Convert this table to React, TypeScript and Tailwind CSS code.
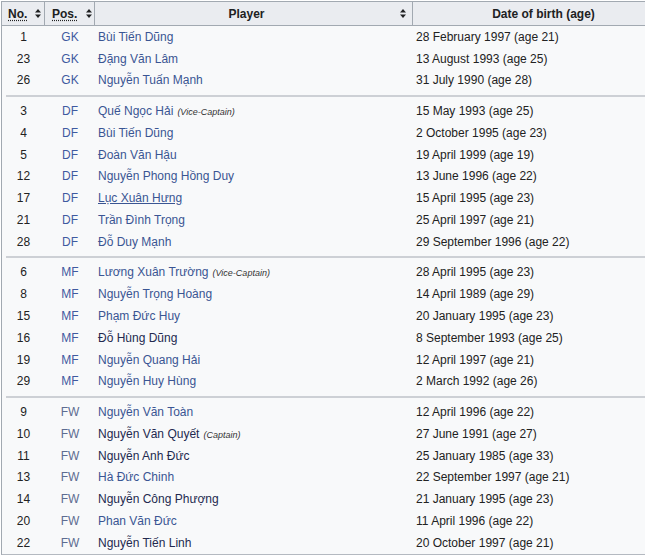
import React from "react";

type Player = {
  no: number;
  pos: string;
  name: string;
  note?: string;
  dob: string;
  visited?: boolean;
  hover?: boolean;
};

// squad grouped by position
const groups: Player[][] = [
  [
    { no: 1, pos: "GK", name: "Bùi Tiến Dũng", dob: "28 February 1997 (age 21)" },
    { no: 23, pos: "GK", name: "Đặng Văn Lâm", dob: "13 August 1993 (age 25)" },
    { no: 26, pos: "GK", name: "Nguyễn Tuấn Mạnh", dob: "31 July 1990 (age 28)" },
  ],
  [
    { no: 3, pos: "DF", name: "Quế Ngọc Hải", note: "(Vice-Captain)", dob: "15 May 1993 (age 25)" },
    { no: 4, pos: "DF", name: "Bùi Tiến Dũng", dob: "2 October 1995 (age 23)" },
    { no: 5, pos: "DF", name: "Đoàn Văn Hậu", dob: "19 April 1999 (age 19)" },
    { no: 12, pos: "DF", name: "Nguyễn Phong Hồng Duy", dob: "13 June 1996 (age 22)" },
    { no: 17, pos: "DF", name: "Lục Xuân Hưng", dob: "15 April 1995 (age 23)", hover: true },
    { no: 21, pos: "DF", name: "Trần Đình Trọng", dob: "25 April 1997 (age 21)" },
    { no: 28, pos: "DF", name: "Đỗ Duy Mạnh", dob: "29 September 1996 (age 22)" },
  ],
  [
    { no: 6, pos: "MF", name: "Lương Xuân Trường", note: "(Vice-Captain)", dob: "28 April 1995 (age 23)" },
    { no: 8, pos: "MF", name: "Nguyễn Trọng Hoàng", dob: "14 April 1989 (age 29)" },
    { no: 15, pos: "MF", name: "Phạm Đức Huy", dob: "20 January 1995 (age 23)" },
    { no: 16, pos: "MF", name: "Đỗ Hùng Dũng", dob: "8 September 1993 (age 25)", visited: true },
    { no: 19, pos: "MF", name: "Nguyễn Quang Hải", dob: "12 April 1997 (age 21)" },
    { no: 29, pos: "MF", name: "Nguyễn Huy Hùng", dob: "2 March 1992 (age 26)" },
  ],
  [
    { no: 9, pos: "FW", name: "Nguyễn Văn Toàn", dob: "12 April 1996 (age 22)" },
    { no: 10, pos: "FW", name: "Nguyễn Văn Quyết", note: "(Captain)", dob: "27 June 1991 (age 27)", visited: true },
    { no: 11, pos: "FW", name: "Nguyễn Anh Đức", dob: "25 January 1985 (age 33)", visited: true },
    { no: 13, pos: "FW", name: "Hà Đức Chinh", dob: "22 September 1997 (age 21)" },
    { no: 14, pos: "FW", name: "Nguyễn Công Phượng", dob: "21 January 1995 (age 23)", visited: true },
    { no: 20, pos: "FW", name: "Phan Văn Đức", dob: "11 April 1996 (age 22)" },
    { no: 22, pos: "FW", name: "Nguyễn Tiến Linh", dob: "20 October 1997 (age 21)", visited: true },
  ],
];

function SortIcon() {
  return (
    <svg width="6" height="9" viewBox="0 0 6 9" className="shrink-0">
      <path d="M3 0L6 3.6H0Z" fill="#202122" />
      <path d="M3 9L0 5.4H6Z" fill="#202122" />
    </svg>
  );
}

function Row({ p }: { p: Player }) {
  return (
    <div className="grid grid-cols-[43px_50px_318px_1fr] h-[21.8px] items-center whitespace-nowrap">
      <div className="text-center text-[#222]">{p.no}</div>
      <div className={"text-center " + (p.pos === "FW" ? "text-[#5d6c91]" : "text-[#3f5aa0]")}>{p.pos}</div>
      <div className="pl-[3px]">
        <span className={(p.visited ? "text-[#23294f]" : "text-[#3a5593]") + (p.hover ? " underline" : "")}>
          {p.name}
        </span>
        {p.note && <i className="ml-[4px] text-[9px] text-[#333]">{p.note}</i>}
      </div>
      <div className="pl-[3px] text-[#222]">{p.dob}</div>
    </div>
  );
}

export default function App() {
  return (
    <div className="w-[645px] h-[555px] overflow-hidden bg-white pt-px pl-px font-['Liberation_Sans',Arial,sans-serif] text-[12px]">
      {/* table */}
      <div className="w-[674px] border border-[#a2a9b1] border-b-2 border-b-[#b4b9c0] bg-[#f8f9fa]">
        {/* header */}
        <div className="grid grid-cols-[43px_50px_318px_1fr] h-[24px] bg-[#eaecf0] border-b border-[#a2a9b1] font-bold text-[#202122]">
          <div className="flex items-center pl-[6px] gap-[8px] border-r border-[#a2a9b1]">
            <span className="underline decoration-dotted underline-offset-2">No.</span>
            <SortIcon />
          </div>
          <div className="flex items-center pl-[7px] gap-[9px] border-r border-[#a2a9b1]">
            <span className="underline decoration-dotted underline-offset-2">Pos.</span>
            <SortIcon />
          </div>
          <div className="relative flex items-center justify-center pr-[14px] border-r border-[#a2a9b1]">
            <span>Player</span>
            <div className="absolute right-[6px] top-[7px]">
              <SortIcon />
            </div>
          </div>
          <div className="flex items-center justify-center">Date of birth (age)</div>
        </div>

        {/* body */}
        {groups.map((g, i) => (
          <div key={i}>
            {i > 0 && (
              <div className="h-[8.8px] flex items-center pl-[4px]">
                <div className="h-[2px] w-full bg-[#cdd0d5]" />
              </div>
            )}
            {g.map((p) => (
              <Row key={p.no} p={p} />
            ))}
          </div>
        ))}
      </div>
    </div>
  );
}
